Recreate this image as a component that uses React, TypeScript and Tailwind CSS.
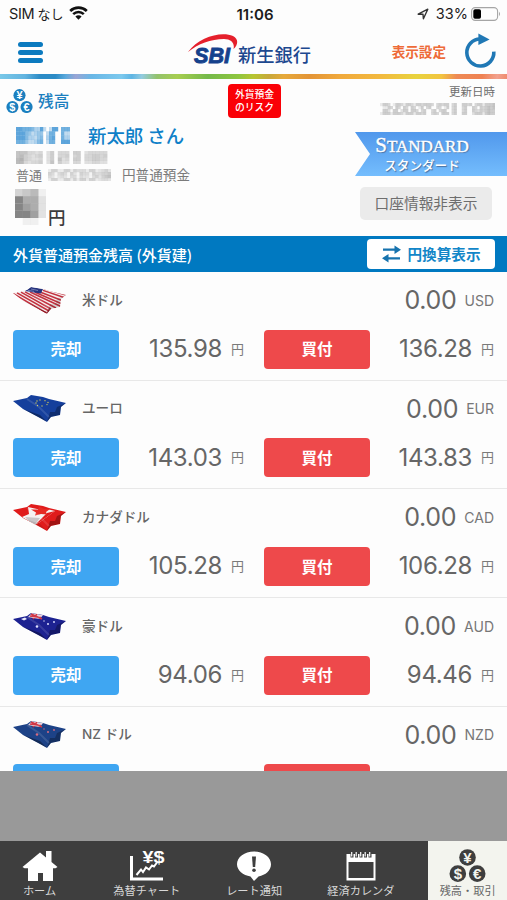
import type { ReactNode } from 'react';

const JP = "font-['Noto_Sans_CJK_JP',sans-serif]";
const NUM = "font-['Inter','Noto_Sans_CJK_JP',sans-serif]";

type FlagKind = 'us' | 'eu' | 'ca' | 'au' | 'nz';

type Currency = { code: string; name: string; flag: FlagKind; sell?: string; buy?: string };

const currencies: Currency[] = [
  { code: 'USD', name: '米ドル', flag: 'us', sell: '135.98', buy: '136.28' },
  { code: 'EUR', name: 'ユーロ', flag: 'eu', sell: '143.03', buy: '143.83' },
  { code: 'CAD', name: 'カナダドル', flag: 'ca', sell: '105.28', buy: '106.28' },
  { code: 'AUD', name: '豪ドル', flag: 'au', sell: '94.06', buy: '94.46' },
  { code: 'NZD', name: 'NZ ドル', flag: 'nz' },
];

// each character is one cell, 0 = clear, 9 = full colour
function Mosaic({ rows, width, height, color }: { rows: string[]; width: number; height: number; color: string }) {
  const cols = rows[0].length;
  const cw = width / cols;
  const ch = height / rows.length;
  return (
    <svg width={width} height={height} className="block shrink-0" aria-hidden="true">
      {rows.map((row, y) =>
        row.split('').map((v, x) => (
          <rect key={`${x}-${y}`} x={x * cw} y={y * ch} width={cw + 0.2} height={ch + 0.2} fill={color} opacity={Number(v) / 9} />
        ))
      )}
    </svg>
  );
}

function Coins({ size, fill, text }: { size: number; fill: string; text: string }) {
  const coins = [
    { x: 18.5, y: 8.3, s: '¥' },
    { x: 8.8, y: 24.5, s: '$' },
    { x: 28.2, y: 24.5, s: '€' },
  ];
  return (
    <svg width={size} height={size * 0.9} viewBox="0 0 37 33" className="block shrink-0">
      {coins.map((c) => (
        <g key={c.s}>
          <circle cx={c.x} cy={c.y} r="8.3" fill={fill} />
          <text x={c.x} y={c.y + 5.3} textAnchor="middle" fontSize="15" fontWeight="700" fontFamily="Liberation Sans" fill={text}>
            {c.s}
          </text>
        </g>
      ))}
    </svg>
  );
}

const OUTLINE = 'M0 6 L14 3 L18 0 L30 2 L36 4 L53 8 L48 12 L47 20 L38 22 L34 27 L27 23 L10 14 Z';

function Flag({ kind }: { kind: FlagKind }) {
  const id = `flag-${kind}`;
  const base = { us: '#f4eeee', eu: '#153f9c', ca: '#e01b1b', au: '#1d2291', nz: '#1d4287' }[kind];
  return (
    <svg width="54" height="28" viewBox="0 0 54 28" className="block shrink-0">
      <defs>
        <clipPath id={id}>
          <path d={OUTLINE} />
        </clipPath>
      </defs>
      <g clipPath={`url(#${id})`}>
        <rect width="54" height="28" fill={base} />
        {kind === 'us' && (
          <>
            <g stroke="#c3313f" strokeWidth="1.5" fill="none">
              <path d="M0 6.5 L33 26" />
              <path d="M4 5.8 L36 24" />
              <path d="M8 5.2 L38 22" />
              <path d="M12 4.8 L43 21" />
              <path d="M17 5 L48 19.5" />
              <path d="M22 5.2 L48 16.5" />
              <path d="M27 5 L49 13.5" />
              <path d="M30 3.4 L51 10.5" />
              <path d="M31 1.5 L53 8" />
            </g>
            <path d="M12 4 L18 0 L30 2 L28 6.5 L21 5.4 Z" fill="#26347e" />
            <path d="M18 2 L25 3.5 M15 3.5 L21 4.3" stroke="#a6aed6" strokeWidth="0.6" />
            <path d="M24 21 L34 27 L38 22 L36 21 L34 25 Z" fill="#8e1522" opacity="0.8" />
          </>
        )}
        {kind === 'eu' && (
          <g fill="#d8cf5a">
            {[[27, 5], [32, 5.7], [35, 7.5], [34, 9.6], [29, 11], [24.5, 10.5], [23, 8], [24, 6]].map(([x, y]) => (
              <circle key={`${x}-${y}`} cx={x} cy={y} r="0.65" />
            ))}
          </g>
        )}
        {kind === 'ca' && (
          <>
            <path d="M15 3 L24 5 L34 5 L42 7 L27 18 L22 21 L9 13 L16 10 Z" fill="#f5f1f1" />
            <path d="M12 13 L27 14 L21 22 Z" fill="#cbc5c7" />
            <path d="M34 9 L42 7 L27 18 L23 20 Z" fill="#e01b1b" />
            <path d="M18 5.5 L25 5.5 L26 2.5 L31 5 L37 5 L33 8 L34 10.5 L28 10 L22 11.5 L23 8.5 Z" fill="#e62a24" />
          </>
        )}
        {(kind === 'au' || kind === 'nz') && (
          <>
            <path d="M15 4 L19 0 L30 2 L27 6 L20 5 Z" fill="#e8d5df" />
            <path d="M17 3 L28 4.5 M24 1 L20 6 M18 1 L29 6" stroke="#d13745" strokeWidth="1.7" />
            <g fill={kind === 'au' ? '#dfe1ff' : '#d66b80'}>
              <circle cx="35" cy="11" r="1" />
              <circle cx="41" cy="9" r="0.9" />
              <circle cx="24" cy="13.5" r="1.3" />
              <circle cx="31" cy="8" r="0.7" />
            </g>
            {kind === 'au' && <path d="M8 6 L12 4.5 L14 6 L11 7.5 Z" fill="#e8e8fa" />}
          </>
        )}
        {/* folds in the cloth */}
        <path d="M10 14 L27 20 L34 27 Z" fill="#000" opacity={kind === 'us' || kind === 'ca' ? 0.1 : 0.35} />
        <path d="M34 27 L38 22 L47 20 L48 12 L53 8 L44 12 L42 17 L37 17 Z" fill="#000" opacity={kind === 'us' ? 0.12 : 0.28} />
        <path d="M14 4 L26 12 L36 22" stroke="#fff" strokeWidth="2" opacity="0.12" fill="none" />
      </g>
    </svg>
  );
}

function StatusBar() {
  return (
    <div className={`grid h-[28px] grid-cols-3 items-center pl-[9px] pr-[6px] text-[#1c1c1c] ${NUM}`}>
      <div className="flex items-center">
        <span className="text-[14.5px] leading-none tracking-[-0.3px]">SIM</span>
        <span className="ml-[3px] text-[13px] leading-none">なし</span>
        <svg width="19" height="14" viewBox="0 0 19 14" className="ml-[6px] -mt-[3px]">
          <path d="M1.2 5 A12 12 0 0 1 17.8 5" fill="none" stroke="#111" strokeWidth="2.7" />
          <path d="M4.2 8.2 A7.6 7.6 0 0 1 14.8 8.2" fill="none" stroke="#111" strokeWidth="2.5" />
          <path d="M6.4 10.5 A4.4 4.4 0 0 1 12.6 10.5 L9.5 13.8 Z" fill="#111" />
        </svg>
      </div>
      <div className="text-center text-[15px] font-semibold leading-none">11:06</div>
      <div className="flex items-center justify-end">
        <svg width="12" height="12" viewBox="0 0 12 12" className="mr-[7px]">
          <path d="M1.2 6.2 L10.8 1.2 L6.4 10.8 L6 6.2 Z" fill="none" stroke="#333" strokeWidth="1.4" strokeLinejoin="round" />
        </svg>
        <span className="text-[14.5px] leading-none">33%</span>
        <svg width="30" height="14" viewBox="0 0 30 14" className="-mt-[1px] ml-[3px]">
          <rect x="0.6" y="0.6" width="26" height="12.8" rx="3.6" fill="none" stroke="#a5a5a5" strokeWidth="1.1" />
          <rect x="2.3" y="2.3" width="7.7" height="9.4" rx="1.8" fill="#000" />
          <path d="M28 4.8 Q30 7 28 9.2 Z" fill="#a5a5a5" />
        </svg>
      </div>
    </div>
  );
}

function Header() {
  return (
    <header className="flex h-[46px] items-center pl-[18px] pr-[10px]">
      <div className="mt-[2px] flex w-[25px] flex-col gap-[3px]">
        <span className="h-[5px] rounded-full bg-[#0b7abf]" />
        <span className="h-[5px] rounded-full bg-[#0b7abf]" />
        <span className="h-[5px] rounded-full bg-[#0b7abf]" />
      </div>
      <svg width="130" height="38" viewBox="0 0 130 38" className="ml-[142px]">
        <path d="M3 20 C14 5 36 -1 48 4 C54 7 53 13 48.5 17 C50 11 46 7 39 7 C26 7 13 12 3 20 Z" fill="#e5202c" />
        <text x="9" y="31" fontFamily="Liberation Sans" fontSize="22.5" fontWeight="700" fontStyle="italic" fill="#15418c" stroke="#15418c" strokeWidth="0.9" textLength="36" lengthAdjust="spacingAndGlyphs">
          SBI
        </text>
        <text x="53" y="30" fontFamily="Noto Sans CJK JP" fontSize="18" fontWeight="500" fill="#1d488f" textLength="73" lengthAdjust="spacingAndGlyphs">
          新生銀行
        </text>
      </svg>
      <span className={`ml-auto mt-[2px] text-[13.6px] font-bold leading-none text-[#ee6b38] ${JP}`}>表示設定</span>
      <svg width="34" height="36" viewBox="0 0 34 36" className="ml-[17px]">
        <path d="M17 6 A13.5 13.5 0 1 0 30.8 18.6" fill="none" stroke="#2078b5" strokeWidth="3.6" />
        <path d="M15.4 0.5 L26.6 6.6 L15.4 12 Z" fill="#2078b5" />
      </svg>
    </header>
  );
}

function RainbowLine() {
  return (
    <div className="h-[5px] bg-[linear-gradient(100deg,#79c8e8_0%,#62b4e0_5%,#2b8bc6_8%,#2b8bc6_11%,#5aa9dc_13%,#9aa5d5_15%,#69b7e6_18%,#7cc9ee_24%,#5eb5e4_26%,#92cbe0_28%,#93c26c_31%,#a7ce50_35%,#74b94a_41%,#8ec63f_47%,#b7c530_50%,#c7a83a_53%,#e6a93a_56%,#e39436_61%,#f0a93c_67%,#f2b93e_75%,#e8d33e_82%,#f2c440_87%,#ee8a55_90%,#ef8152_95%,#f2a18e_98%,#ef8a6c_100%)]" />
  );
}

function Account() {
  return (
    <section className={`flex h-[157px] pl-[6px] ${JP}`}>
      <div className="w-[222px]">
        <div className="mt-[9px] flex h-[26px] items-center">
          <Coins size={27} fill="#1b7fbf" text="#fff" />
          <span className="ml-[5px] text-[15.7px] font-medium leading-none text-[#1b7fbf]">残高</span>
        </div>
        <div className="ml-[10px] mt-[11px] flex h-[20px] items-center">
          <Mosaic
            width={54}
            height={17}
            color="#4a9ad6"
            rows={['887776448303880777', '888653455037700733', '888644356047800744', '777533467037700888']}
          />
          <span className="ml-[18px] whitespace-nowrap text-[18.4px] font-medium leading-none text-[#0f80c8]">新太郎 さん</span>
        </div>
        <div className="ml-[10px] mt-[6px] h-[13px]">
          <Mosaic
            width={95}
            height={13}
            color="#a8a8a8"
            rows={['6664434035044405503444440', '6754345035044504504455450', '7854334035063405504455440', '7743445036053304403344330']}
          />
        </div>
        <div className="ml-[10px] mt-[3px] flex h-[15px] items-center whitespace-nowrap text-[13px] leading-none text-[#7b7b7b]">
          <span>普通</span>
          <span className="ml-[6px]">
            <Mosaic
              width={63}
              height={12}
              color="#b0b0b0"
              rows={['25522552544425523453', '54145415315441544556', '43134314414331453567', '25522552525525523443']}
            />
          </span>
          <span className="ml-[11px] text-[13.6px]">円普通預金</span>
        </div>
        <div className="ml-[9px] mt-[7px] flex items-end">
          <Mosaic width={31} height={36} color="#858585" rows={['3451', '9662', '9762', '9972', '0110']} />
          <span className="ml-[2px] text-[17.5px] font-medium leading-[17px] text-[#3c3c3c]">円</span>
        </div>
      </div>
      <div className="mt-[5px] flex h-[34px] w-[53px] flex-col items-center justify-center rounded-[4px] bg-[#fa0007] text-[9.8px] font-medium leading-[13px] text-white">
        <span className="block h-[13px] leading-[13px]">外貨預金</span>
        <span className="block h-[13px] leading-[13px]">のリスク</span>
      </div>
      <div className="ml-auto flex w-[152px] flex-col items-end">
        <div className="mr-[12px] mt-[6px] text-[11.5px] leading-[13px] text-[#6e6e6e]">更新日時</div>
        <div className="mr-[12px] mt-[5px]">
          <Mosaic
            width={115}
            height={12}
            color="#a8a8a8"
            rows={[
              '255402554255425545554045455045005545045525556',
              '022540540540540250450044025045004500540545656',
              '055305503550554045004504550045004500543545655',
              '255525554255525545004540555045005500355525655',
            ]}
          />
        </div>
        <div className="mt-[17px] flex h-[44px] w-[152px] flex-col items-center bg-linear-to-b from-[#5198ec] to-[#74bdfd] pt-[5px] pr-[18px] text-white [clip-path:polygon(0_0,100%_0,100%_100%,0_100%,15px_50%)] [text-shadow:1px_1px_1px_#496f9d]">
          <span className="font-['Liberation_Serif',serif] text-[21px] leading-[17px] [-webkit-text-stroke:0.4px_white]">
            S<span className="text-[17px]">TANDARD</span>
          </span>
          <span className="mt-[2px] text-[12.6px] font-medium leading-[15px]">スタンダード</span>
        </div>
        <button className="mr-[15px] mt-[11px] h-[33px] w-[132px] rounded-[5px] bg-[#ebebeb] text-[14.7px] leading-none text-[#6e6e6e]">
          口座情報非表示
        </button>
      </div>
    </section>
  );
}

function TitleBar() {
  return (
    <div className={`flex h-[36px] items-center justify-between bg-[#0079c1] pl-[13px] pr-[12px] ${JP}`}>
      <h1 className="text-[15px] font-medium leading-none text-white">外貨普通預金残高 (外貨建)</h1>
      <button className="flex h-[30px] w-[128px] items-center justify-center rounded-[4px] bg-white text-[14.6px] font-bold leading-none text-[#1286c8]">
        <svg width="19" height="18" viewBox="0 0 19 18" className="mr-[7px]">
          <path d="M1 4.7 H13 M18 13.3 H6" stroke="#1773ae" strokeWidth="2.2" />
          <path d="M12.5 0.5 L19 4.7 L12.5 8.9 Z M6.5 9.1 L0 13.3 L6.5 17.5 Z" fill="#1773ae" />
        </svg>
        円換算表示
      </button>
    </div>
  );
}

function Price({ value }: { value: string }) {
  return (
    <span className="flex items-center">
      <span className="text-[24px] font-normal leading-none tracking-[-0.35px] text-[#666]">{value}</span>
      <span className="ml-[9px] text-[13px] leading-none text-[#7a7a7a]">円</span>
    </span>
  );
}

function CurrencyRow({ item }: { item: Currency }) {
  return (
    <li className={`h-[108.7px] shrink-0 border-b border-[#e8e8e8] pl-[13px] pr-[13px] ${NUM}`}>
      <div className="flex h-[57px] items-center">
        <Flag kind={item.flag} />
        <span className="ml-[15px] text-[13.6px] font-medium leading-none text-[#666]">{item.name}</span>
        <span className="ml-auto text-[25px] font-normal leading-none tracking-[-0.3px] text-[#666]">0.00</span>
        <span className="ml-[8px] text-[14px] font-normal leading-none text-[#777]">{item.code}</span>
      </div>
      <div className="flex h-[40px] items-center">
        <button className="h-[39px] w-[106px] rounded-[4px] bg-[#3fa6f2] pt-[2px] text-[15.5px] font-bold leading-none text-white">
          {item.sell && '売却'}
        </button>
        <div className="flex w-[125px] justify-end">{item.sell && <Price value={item.sell} />}</div>
        <button className="ml-[20px] h-[39px] w-[106px] rounded-[4px] bg-[#ee494b] pt-[2px] text-[15.5px] font-bold leading-none text-white">
          {item.buy && '買付'}
        </button>
        <div className="flex flex-1 justify-end">{item.buy && <Price value={item.buy} />}</div>
      </div>
    </li>
  );
}

function Tab({ label, icon, active }: { label: string; icon: ReactNode; active?: boolean }) {
  return (
    <a className={active ? 'flex h-full w-[79px] flex-col items-center bg-[#f3f4ee] text-[#666]' : 'flex h-full w-[107px] flex-col items-center text-[#d8d8d8]'}>
      <span className="mt-[8px] flex h-[33px] items-center">{icon}</span>
      <span className="mt-[1px] whitespace-nowrap text-[11.2px] leading-[14px]">{label}</span>
    </a>
  );
}

function TabBar() {
  return (
    <nav className={`flex h-[59px] bg-[#3e3e3e] ${JP}`}>
      <div className="flex w-[79px] justify-center">
        <Tab
          label="ホーム"
          icon={
            <svg width="36" height="32" viewBox="0 0 36 32">
              <path d="M0.5 17 L18 2.5 L24 7.5 V1 H29.5 V12 L35.5 17 L33.5 18.2 H31 V31 H21 V23 H16 V31 H6 V18.2 H2.5 Z" fill="#fff" />
            </svg>
          }
        />
      </div>
      <div className="flex w-[136px] justify-center">
        <Tab
          label="為替チャート"
          icon={
            <svg width="36" height="32" viewBox="0 0 36 32">
              <path d="M2.5 6 V29 H34" fill="none" stroke="#fff" strokeWidth="3" />
              <path d="M7.5 25 L12 19.5 L14 22 L17 17.5 L20 19.5 L23 15.5 L25 16.5 L28 12.5" fill="none" stroke="#fff" strokeWidth="2" />
              <text x="13.5" y="13" fill="#fff" fontFamily="Liberation Sans" fontSize="16.5" fontWeight="700" textLength="22" lengthAdjust="spacingAndGlyphs">
                ¥$
              </text>
            </svg>
          }
        />
      </div>
      <div className="flex w-[79px] justify-center">
        <Tab
          label="レート通知"
          icon={
            <svg width="36" height="32" viewBox="0 0 36 32">
              <path d="M18 1.5 C27.5 1.5 35 7 35 14.3 C35 20.5 29.5 25.2 22.5 26.4 L18 31 L14.5 26.5 C7 25.4 1 20.5 1 14.3 C1 7 8.5 1.5 18 1.5 Z" fill="#fff" />
              <path d="M16 6.5 H20 L19.2 17 H16.8 Z" fill="#3e3e3e" />
              <circle cx="18" cy="20.2" r="1.8" fill="#3e3e3e" />
            </svg>
          }
        />
      </div>
      <div className="flex w-[135px] justify-center">
        <Tab
          label="経済カレンダ"
          icon={
            <svg width="30" height="30" viewBox="0 0 30 30">
              <rect x="0.5" y="3" width="29" height="26.5" fill="#fff" />
              <rect x="2.5" y="11" width="25" height="16" fill="#3e3e3e" />
              {[6, 10.5, 15, 19.5, 24].map((x) => (
                <g key={x}>
                  <path d={`M${x} 2 V6.5`} stroke="#3e3e3e" strokeWidth="3" />
                  <path d={`M${x - 0.3} 1 V5.5`} stroke="#fff" strokeWidth="1.2" />
                </g>
              ))}
            </svg>
          }
        />
      </div>
      <Tab active label="残高・取引" icon={<Coins size={37} fill="#3e3e3e" text="#f3f4ee" />} />
    </nav>
  );
}

export default function App() {
  return (
    <div className="flex h-[900px] w-[507px] flex-col overflow-hidden bg-[#fdfdfd]">
      <StatusBar />
      <Header />
      <RainbowLine />
      <Account />
      <TitleBar />
      <ul className="flex h-[499px] flex-col overflow-hidden">
        {currencies.map((item) => (
          <CurrencyRow key={item.code} item={item} />
        ))}
      </ul>
      <div className="h-[70px] bg-[#999]" />
      <TabBar />
    </div>
  );
}
